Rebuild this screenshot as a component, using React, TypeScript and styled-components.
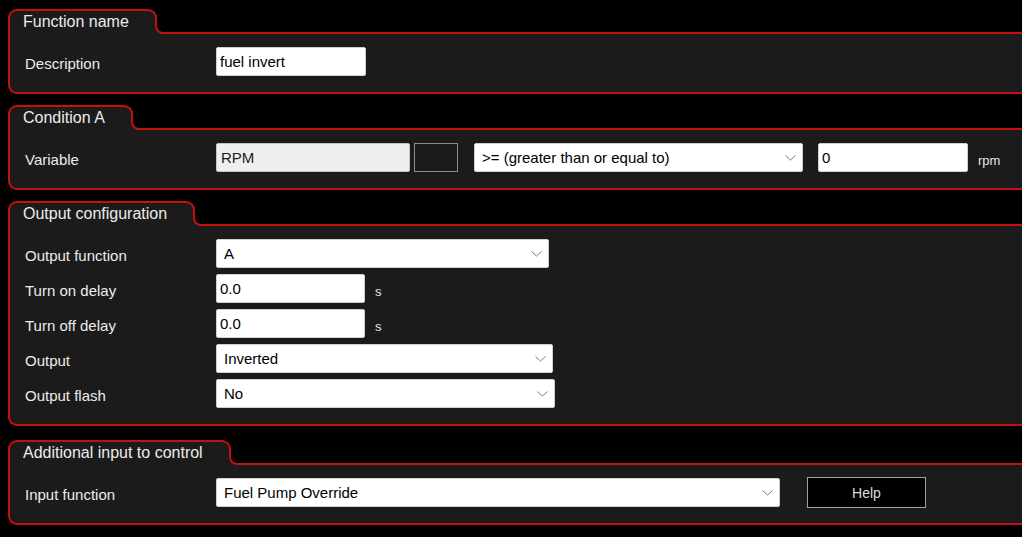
import React from 'react'
import styled, { createGlobalStyle } from 'styled-components'

const RED = '#c80f0f'
const PANEL = '#1b1b1b'

const GlobalStyle = createGlobalStyle`
  html, body {
    margin: 0;
    padding: 0;
    background: #000;
    overflow: hidden;
  }
  body {
    font-family: "Liberation Sans", Arial, sans-serif;
  }
`

export default function App() {
  return (
    <>
      <GlobalStyle />
      <Page>
        <Group>
          <Tab>Function name</Tab>
          <Body>
            <Row>
              <Label>Description</Label>
              <TextBox width={150} readOnly value="fuel invert" />
            </Row>
          </Body>
        </Group>

        <Group>
          <Tab>Condition A</Tab>
          <Body>
            <Row>
              <Label>Variable</Label>
              <ReadOnlyBox>RPM</ReadOnlyBox>
              <Swatch />
              <Dropdown width={329} gap={16} text=">= (greater than or equal to)" />
              <TextBox width={150} readOnly value="0" style={{ marginLeft: 15 }} />
              <Unit>rpm</Unit>
            </Row>
          </Body>
        </Group>

        <Group>
          <Tab>Output configuration</Tab>
          <Body>
            <Row>
              <Label>Output function</Label>
              <Dropdown width={333} text="A" />
            </Row>
            <Row>
              <Label>Turn on delay</Label>
              <TextBox width={149} readOnly value="0.0" />
              <Unit>s</Unit>
            </Row>
            <Row>
              <Label>Turn off delay</Label>
              <TextBox width={149} readOnly value="0.0" />
              <Unit>s</Unit>
            </Row>
            <Row>
              <Label>Output</Label>
              <Dropdown width={337} text="Inverted" />
            </Row>
            <Row>
              <Label>Output flash</Label>
              <Dropdown width={339} text="No" />
            </Row>
          </Body>
        </Group>

        <Group $offset={3}>
          <Tab>Additional input to control</Tab>
          <Body>
            <Row>
              <Label>Input function</Label>
              <Dropdown width={564} text="Fuel Pump Override" />
              <HelpButton>Help</HelpButton>
            </Row>
          </Body>
        </Group>
      </Page>
    </>
  )
}

function Dropdown({ width, gap = 0, text }: { width: number; gap?: number; text: string }) {
  return (
    <DropdownBox $width={width} $gap={gap}>
      <span>{text}</span>
      <svg width="11" height="6" viewBox="0 0 11 6">
        <polyline points="0.5,0.5 5.5,5 10.5,0.5" fill="none" stroke="#7c7c7c" strokeWidth="1" />
      </svg>
    </DropdownBox>
  )
}

const Page = styled.div`
  width: 1022px;
  height: 537px;
  overflow: hidden;
  box-sizing: border-box;
  padding: 9px 0 0 8px;
  display: flex;
  flex-direction: column;
  gap: 11px;
`

const Group = styled.section<{ $offset?: number }>`
  width: 1040px;
  margin-top: ${(p) => p.$offset ?? 0}px;
  display: flex;
  flex-direction: column;
  align-items: flex-start;
`

const Tab = styled.div`
  position: relative;
  z-index: 1;
  margin-bottom: -2px;
  padding: 1px 26px 2px 13px;
  border: 2px solid ${RED};
  border-bottom: none;
  border-radius: 9px 9px 0 0;
  background: ${PANEL};
  color: #ececec;
  font-size: 16px;
  line-height: 20px;

  &::before {
    content: '';
    position: absolute;
    left: 100%;
    bottom: 0;
    width: 8px;
    height: 8px;
    background: ${PANEL};
  }

  &::after {
    content: '';
    position: absolute;
    left: 100%;
    bottom: 0;
    width: 6px;
    height: 6px;
    border-left: 2px solid ${RED};
    border-bottom: 2px solid ${RED};
    border-bottom-left-radius: 8px;
    background: #000;
  }
`

const Body = styled.div`
  width: 100%;
  box-sizing: border-box;
  border: 2px solid ${RED};
  border-right: none;
  border-radius: 0 0 0 9px;
  background: ${PANEL};
  padding: 13px 0 16px 15px;
  display: flex;
  flex-direction: column;
  gap: 6px;
`

const Row = styled.div`
  display: flex;
  align-items: center;
  height: 29px;
`

const Label = styled.div`
  width: 191px;
  flex-shrink: 0;
  padding-top: 4px;
  color: #ececec;
  font-size: 15px;
  line-height: 20px;
`

const TextBox = styled.input<{ width: number }>`
  width: ${(p) => p.width}px;
  height: 29px;
  box-sizing: border-box;
  margin: 0;
  padding: 0 3px;
  border: 1px solid #cfcfcf;
  border-radius: 2px;
  background: #fff;
  color: #000;
  font: 15px "Liberation Sans", Arial, sans-serif;
  outline: none;
`

const ReadOnlyBox = styled.div`
  width: 194px;
  height: 29px;
  box-sizing: border-box;
  padding: 0 4px;
  display: flex;
  align-items: center;
  border: 1px solid #c4c4c4;
  border-radius: 2px;
  background: #efefef;
  color: #1a1a1a;
  font-size: 15px;
`

const Swatch = styled.div`
  width: 44px;
  height: 29px;
  box-sizing: border-box;
  margin-left: 4px;
  border: 1px solid #8c8c8c;
  background: ${PANEL};
`

const DropdownBox = styled.div<{ $width: number; $gap: number }>`
  width: ${(p) => p.$width}px;
  height: 29px;
  box-sizing: border-box;
  margin-left: ${(p) => p.$gap}px;
  padding: 0 6px 0 7px;
  display: flex;
  align-items: center;
  justify-content: space-between;
  border: 1px solid #cfcfcf;
  border-radius: 2px;
  background: #fff;
  color: #000;
  font-size: 15px;
`

const Unit = styled.span`
  margin-left: 10px;
  padding-top: 6px;
  color: #e6e6e6;
  font-size: 13px;
`

const HelpButton = styled.button`
  width: 119px;
  height: 31px;
  margin-left: 27px;
  border: 1px solid #a0a0a0;
  background: #000;
  color: #dcdcdc;
  font: 14px "Liberation Sans", Arial, sans-serif;
  cursor: pointer;
`
